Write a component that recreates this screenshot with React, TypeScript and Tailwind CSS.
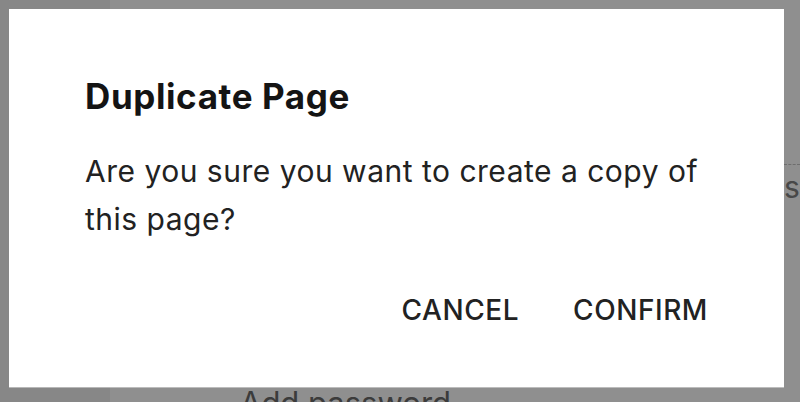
import React from "react";

const DuplicateDialog = () => (
  <div className="absolute inset-0 bg-black/[0.44] p-[9px]">
    <div
      role="dialog"
      className="h-[378px] w-[775px] bg-white px-[76px] pt-[67px] shadow-[0_1px_0_rgba(255,255,255,0.4)]"
    >
      <h2 className="text-[35px] leading-[40px] font-bold tracking-[0.6px] text-[#141414]">
        Duplicate Page
      </h2>
      <p className="mt-[31px] text-[30px] leading-[48px] tracking-[0.5px] text-[#222]">
        Are you sure you want to create a copy of this page?
      </p>
      <div className="mt-[51px] flex justify-end gap-[54px]">
        <button className="text-[28px] leading-[32px] font-medium tracking-[0.02em] text-[#222]">
          CANCEL
        </button>
        <button className="text-[28px] leading-[32px] font-medium tracking-[0.02em] text-[#222]">
          CONFIRM
        </button>
      </div>
    </div>
  </div>
);

export default function App() {
  return (
    <div className="relative h-[402px] w-[800px] overflow-hidden font-['Inter',sans-serif]">
      <div className="flex h-full">
        <aside className="w-[110px] bg-[#f1f1f1]" />
        <main className="grid flex-1 grid-cols-[1fr_16px] bg-white">
          <div className="pl-[130px] pt-[386px]">
            <span className="whitespace-nowrap text-[31px] leading-[34px] text-[#6a6a6a]">
              Add password
            </span>
          </div>
          <div className="pt-[164px]">
            <div className="border-t border-dashed border-[#c4c4c4] pt-[4px] text-[30px] leading-[36px] text-[#808080]">
              s
            </div>
          </div>
        </main>
      </div>
      <DuplicateDialog />
    </div>
  );
}
